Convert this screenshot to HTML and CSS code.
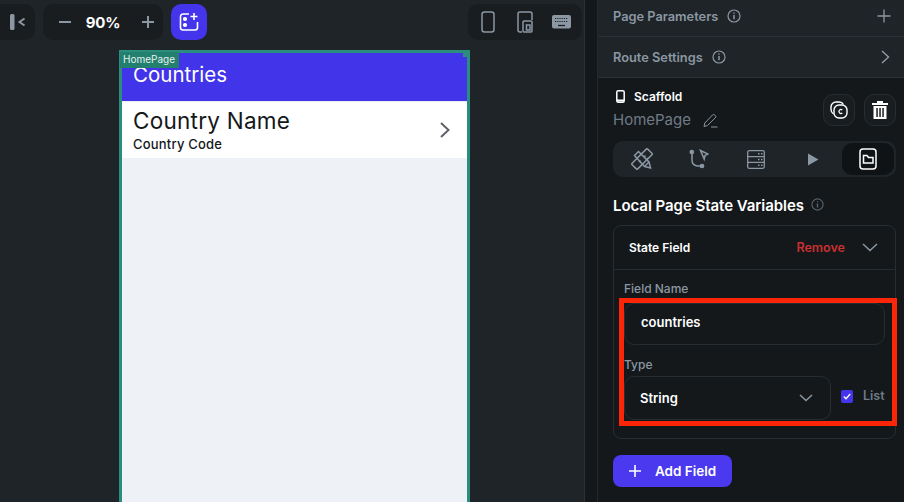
FILE: index.html
```html
<!DOCTYPE html>
<html lang="en">
<head>
<meta charset="utf-8">
<title>HomePage</title>
<link rel="stylesheet" href="styles.css">
</head>
<body>
<div class="app">
  <main class="canvas">
    <div class="toolbar">
      <div class="pill pill-collapse">
        <svg width="20" height="20" viewBox="0 0 20 20" fill="none"><rect x="0" y="2" width="4.500" height="16" rx="1.500" fill="#8b97a2"/><path d="M14.500 6.500l-5 3.500 5 3.500" stroke="#8b97a2" stroke-width="2"/></svg>
      </div>
      <div class="pill pill-zoom">
        <svg class="ic" width="14" height="14" viewBox="0 0 14 14"><path d="M1 7h12" stroke="#8b97a2" stroke-width="2"/></svg>
        <span class="zoom-val">90%</span>
        <svg class="ic" width="14" height="14" viewBox="0 0 14 14"><path d="M1 7h12M7 1v12" stroke="#8b97a2" stroke-width="2"/></svg>
      </div>
      <div class="add-btn">
        <svg width="20" height="20" viewBox="0 0 20 20" fill="none" stroke="#fff" stroke-width="1.600"><path d="M10 2H4a2.500 2.500 0 0 0-2.500 2.500v11A2.500 2.500 0 0 0 4 18h12a2.500 2.500 0 0 0 2.500-2.500V10"/><path d="M15 1v7M11.500 4.500h7"/><circle cx="6" cy="7" r="1.300" fill="#fff"/><circle cx="6" cy="13" r="1.300" fill="#fff"/></svg>
      </div>
      <div class="pill pill-devices">
        <svg width="14" height="22" viewBox="0 0 14 22" fill="none" stroke="#8b97a2" stroke-width="1.500"><rect x="1" y="1" width="12" height="20" rx="2.500"/></svg>
        <svg class="tablet-ic" width="16" height="22" viewBox="0 0 16 22" fill="none" stroke="#8b97a2" stroke-width="1.500"><path d="M5 21H3a2 2 0 0 1-2-2V3a2 2 0 0 1 2-2h10a2 2 0 0 1 2 2v6"/><rect x="6" y="10" width="9" height="11" rx="1"/><rect x="9.500" y="14" width="3.500" height="5"/></svg>
        <svg width="20" height="14" viewBox="0 0 20 14"><rect width="19" height="13.500" rx="2" fill="#8b97a2"/><path d="M3 3.500h13M3 6.500h13" stroke="#1a1f23" stroke-width="1.200" stroke-dasharray="1.200 1"/><path d="M6 10.500h7" stroke="#1a1f23" stroke-width="1.300"/></svg>
      </div>
    </div>
    <div class="phone">
      <span class="phone-tag">HomePage</span>
      <span class="phone-corner"></span>
      <header class="appbar">Countries</header>
      <div class="list-item">
        <div class="item-text">
          <div class="item-title">Country Name</div>
          <div class="item-sub">Country Code</div>
        </div>
        <svg width="12" height="16" viewBox="0 0 12 16" fill="none"><path d="M2 1l7.500 7L2 15" stroke="#5f6368" stroke-width="2"/></svg>
      </div>
    </div>
  </main>
  <div class="strip"></div>
  <aside class="panel">
    <div class="panel-top">
      <div class="row row-params">
        <span class="row-label">Page Parameters</span>
        <svg class="info" width="14" height="14" viewBox="0 0 14 14" fill="none" stroke="#8b97a2" stroke-width="1.200"><circle cx="7" cy="7" r="6"/><path d="M7 6v4.200M7 3.500v1.200" stroke-width="1.500"/></svg>
        <svg class="row-end" width="14" height="14" viewBox="0 0 14 14"><path d="M0.500 7h13M7 0.500v13" stroke="#8b97a2" stroke-width="1.300"/></svg>
      </div>
      <div class="row row-route">
        <span class="row-label">Route Settings</span>
        <svg class="info" width="14" height="14" viewBox="0 0 14 14" fill="none" stroke="#8b97a2" stroke-width="1.200"><circle cx="7" cy="7" r="6"/><path d="M7 6v4.200M7 3.500v1.200" stroke-width="1.500"/></svg>
        <svg class="row-end chevron-end" width="9" height="14" viewBox="0 0 9 14" fill="none"><path d="M1 1l6.500 6L1 13" stroke="#8b97a2" stroke-width="1.500"/></svg>
      </div>
    </div>
    <div class="panel-body">
      <div class="scaffold">
        <div class="scaffold-info">
          <div class="scaffold-title">
            <svg width="9" height="13" viewBox="0 0 9 13" fill="none"><rect x="0.800" y="0.800" width="7.400" height="11.400" rx="1.500" stroke="#fff" stroke-width="1.500"/><path d="M1 10.500h7" stroke="#fff" stroke-width="2"/></svg>
            <span>Scaffold</span>
          </div>
          <div class="scaffold-name">
            <span>HomePage</span>
            <svg width="15" height="15" viewBox="0 0 15 15" fill="none" stroke="#8b97a2" stroke-width="1"><path d="M1 13.500l.8-3.500 7.700-8a1.500 1.500 0 0 1 2.200 0l.6.600a1.500 1.500 0 0 1 0 2.200l-7.800 7.700z"/><path d="M8 14h6.500"/></svg>
          </div>
        </div>
        <div class="square-btn">
          <svg width="18" height="18" viewBox="0 0 18 18" fill="none" stroke="#fff" stroke-width="1.400"><path d="M3.500 13A5.500 5.500 0 0 1 1 8.500V6a5 5 0 0 1 5-5h3a5 5 0 0 1 4.500 2.500"/><rect x="4" y="4" width="13" height="13" rx="5"/><path d="M12.300 9a2 2 0 1 0 0 3" stroke-width="1.300"/></svg>
        </div>
        <div class="square-btn">
          <svg width="16" height="18" viewBox="0 0 16 18" fill="#fff"><path d="M5 0h6v2h5v2H0V2h5zM1.500 5h13v13h-13zM4.300 7v9h1.500V7zm3 0v9h1.500V7zm3 0v9h1.500V7z" fill-rule="evenodd"/></svg>
        </div>
      </div>
      <div class="tabs">
        <div class="tab">
          <svg width="22" height="22" viewBox="0 0 22 22" fill="none" stroke="#8b97a2" stroke-width="1.500"><rect x="7" y="0" width="8" height="22" rx="1" transform="rotate(45 11 11)"/><path d="M10 5l1.500 1.500M7.500 7.500L9 9M12.500 12.500L14 14" transform="rotate(90 11 11)"/><path d="M3.500 7.500L7.500 3.500 18 14l1.500 6-6-1.500z"/><path d="M14 18l4-4"/></svg>
        </div>
        <div class="tab">
          <svg width="20" height="20" viewBox="0 0 20 20" fill="none" stroke="#8b97a2" stroke-width="1.500"><circle cx="2.800" cy="3" r="1.600" fill="#8b97a2"/><circle cx="13" cy="17" r="1.600" fill="#8b97a2"/><path d="M3 4.500v7a5.500 5.500 0 0 0 5.500 5.500H12"/><path d="M11.500 1.500l7.500 3.500-3 1.500-.8 3.500z"/></svg>
        </div>
        <div class="tab">
          <svg width="18" height="19" viewBox="0 0 18 19" fill="none" stroke="#8b97a2" stroke-width="1.300"><rect x="0.700" y="0.700" width="16.600" height="17.600" rx="1.500"/><path d="M1 6.600h16M1 12.400h16"/><path d="M11 3.700h1.500M14 3.700h1.500M11 9.500h1.500M14 9.500h1.500M11 15.300h1.500M14 15.300h1.500" stroke-width="1.500"/></svg>
        </div>
        <div class="tab">
          <svg width="12" height="13" viewBox="0 0 12 13"><path d="M1 0.500l10.500 6L1 12.500z" fill="#8b97a2"/></svg>
        </div>
        <div class="tab tab-active">
          <svg width="18" height="22" viewBox="0 0 18 22" fill="none" stroke="#fff" stroke-width="1.500"><rect x="1" y="1" width="16" height="20" rx="3"/><path d="M4.500 7.500h3.500l1.500 2h4.500v5.500h-9.500z"/></svg>
        </div>
      </div>
      <h2 class="section-title">Local Page State Variables
        <svg class="title-info" width="13" height="13" viewBox="0 0 14 14" fill="none" stroke="#57636c" stroke-width="1.200"><circle cx="7" cy="7" r="6"/><path d="M7 6v4.200M7 3.500v1.200" stroke-width="1.500"/></svg>
      </h2>
      <div class="card">
        <div class="card-head">
          <span class="card-title">State Field</span>
          <span class="remove">Remove</span>
          <svg width="16" height="9" viewBox="0 0 16 9" fill="none"><path d="M1 1l7 6.500L15 1" stroke="#8b97a2" stroke-width="1.500"/></svg>
        </div>
        <div class="card-body">
          <label class="field-label">Field Name</label>
          <div class="input">countries</div>
          <label class="field-label label-type">Type</label>
          <div class="type-row">
            <div class="select">
              <span>String</span>
              <svg width="14" height="8" viewBox="0 0 14 8" fill="none"><path d="M1 1l6 5.500L13 1" stroke="#8b97a2" stroke-width="1.500"/></svg>
            </div>
            <div class="checkbox">
              <svg width="8" height="7" viewBox="0 0 8 7" fill="none"><path d="M0.800 3.500l2.200 2.200L7.200 1" stroke="#fff" stroke-width="1.300"/></svg>
            </div>
            <span class="list-label">List</span>
          </div>
          <div class="highlight"></div>
        </div>
      </div>
      <button class="add-field" type="button">
        <svg width="12" height="12" viewBox="0 0 12 12"><path d="M0 6h12M6 0v12" stroke="#fff" stroke-width="1.600"/></svg>
        <span>Add Field</span>
      </button>
    </div>
  </aside>
</div>
</body>
</html>
```

FILE: styles.css
```css
* { box-sizing: border-box; }
html, body { margin: 0; padding: 0; height: 100%; overflow: hidden; }
body { font-family: "Inter", "Liberation Sans", sans-serif; background: #14181b; }
.app { display: flex; width: 904px; height: 502px; overflow: hidden; }

/* Canvas */
.canvas { width: 585px; background: #1e2428; border-right: 1px solid #2a3036; display: flex; flex-direction: column; }
.toolbar { display: flex; align-items: center; height: 36px; margin-top: 4px; }
.pill { background: #191d20; border-radius: 10px; height: 36px; display: flex; align-items: center; }
.pill-collapse { width: 35px; padding-left: 10px; border-radius: 0 10px 10px 0; }
.pill-zoom { width: 120px; margin-left: 8px; padding: 0 8px 0 15px; justify-content: space-between; }
.zoom-val { color: #fff; font-size: 15px; font-weight: 700; margin-right: 7px; letter-spacing: -.2px; }
.add-btn { width: 36px; height: 36px; margin-left: 8px; border-radius: 10px; background: #4434ec; display: flex; align-items: center; justify-content: center; }
.pill-devices { width: 114px; margin-left: 261px; padding: 0 10px 0 13px; justify-content: space-between; }
.tablet-ic { margin-left: 2px; }

.phone { position: relative; width: 351px; height: 462px; margin: 10px 0 0 119px; border: 3px solid #2a8d7d; border-bottom: 0; background: #eef1f6; }
.phone-tag { position: absolute; left: -2px; top: -1px; width: 59px; height: 16px; background: #23806f; color: #e6f2f0; font-size: 10px; line-height: 15px; padding-left: 3px; z-index: 1; }
.phone-corner { position: absolute; right: -1px; top: -1px; width: 5px; height: 5px; background: #2a8d7d; }
.appbar { height: 48px; background: #4234e8; color: #fff; font-size: 20.500px; line-height: 44px; padding-left: 11px; }
.list-item { height: 57px; background: #fff; display: flex; align-items: center; justify-content: space-between; padding: 0 16px 0 11px; box-shadow: 0 1px 1px rgba(0,0,0,.08) inset; }
.item-title { color: #14181b; font-size: 22.500px; line-height: 29px; letter-spacing: .25px; }
.item-sub { color: #14181b; font-size: 13px; font-weight: 500; line-height: 18px; letter-spacing: .2px; }

.strip { width: 12px; background: #14181b; }

/* Panel */
.panel { flex: 1; display: flex; flex-direction: column; border-left: 1px solid #22282d; color: #fff; }
.panel-top { background: #1e2428; height: 78px; border-bottom: 1px solid #2a3036; }
.row { display: flex; align-items: center; padding: 0 13px 0 15px; }
.row-params { height: 37px; border-bottom: 1px solid #2a3036; padding-bottom: 4px; }
.row-route { height: 40px; }
.row-label { color: #8b97a2; font-size: 12.800px; font-weight: 600; }
.info { margin-left: 9px; }
.row-end { margin-left: auto; }
.chevron-end { margin-right: 1px; }

.panel-body { flex: 1; padding: 10px 8px 0 15px; display: flex; flex-direction: column; }
.scaffold { display: flex; align-items: flex-start; height: 53px; padding-top: 6px; }
.scaffold-info { flex: 1; margin-top: -6px; }
.scaffold-title { display: flex; align-items: center; gap: 9px; padding-left: 3px; height: 16px; font-size: 12px; font-weight: 600; }
.scaffold-name { display: flex; align-items: center; gap: 12px; margin-top: 5px; color: #6f7b86; font-size: 15px; line-height: 22px; }
.square-btn { width: 32px; height: 32px; margin-left: 9px; border: 1px solid #262d32; border-radius: 10px; background: #191d20; display: flex; align-items: center; justify-content: center; }
.tabs { display: flex; align-items: center; width: 283px; height: 36px; padding: 2px 2px 2px 0; background: #1e2428; border-radius: 10px; }
.tab { flex: 0 0 57px; height: 32px; display: flex; align-items: center; justify-content: center; border-radius: 10px; }
.tab-active { background: #101315; flex: 0 0 52px; margin-left: 1px; }
.section-title { display: flex; align-items: center; margin: 19px 0 0; height: 18px; font-size: 15px; font-weight: 600; letter-spacing: -.05px; }
.title-info { margin-left: 7px; margin-top: -2px; }
.card { width: 283px; height: 214px; margin-top: 11px; border: 1px solid #262d32; border-radius: 8px; }
.card-head { display: flex; align-items: center; height: 44px; padding: 0 17px 0 15px; border-bottom: 1px solid #262d32; }
.card-title { flex: 1; font-size: 12px; font-weight: 600; }
.remove { color: #c9302f; font-size: 12.500px; font-weight: 600; margin-right: 17px; }
.card-body { position: relative; padding: 11px 10px 0; }
.field-label { display: block; color: #8b97a2; font-size: 12px; line-height: 16px; font-weight: 500; }
.input { width: 261px; height: 42px; margin-top: 6px; border: 1px solid #262d32; border-radius: 10px; background: #14181b; padding-left: 16px; font-size: 13px; font-weight: 600; line-height: 36px; }
.label-type { margin-top: 12px; }
.type-row { display: flex; align-items: center; margin-top: 3px; }
.select { width: 207px; height: 44px; border: 1px solid #262d32; border-radius: 10px; padding: 0 17px 0 15px; display: flex; align-items: center; justify-content: space-between; font-size: 13px; font-weight: 600; }
.checkbox { width: 12px; height: 13px; margin: -4px 0 0 10px; background: #4434ec; border-radius: 2px; display: flex; align-items: center; justify-content: center; }
.list-label { margin: -6px 0 0 10px; color: #6f7b86; font-size: 12.500px; font-weight: 600; }
.highlight { position: absolute; left: 5px; top: 28px; width: 278px; height: 128px; border: 5px solid #fb2508; pointer-events: none; }
.add-field { display: flex; align-items: center; gap: 14px; width: 119px; height: 32px; margin-top: 16px; padding: 0 0 0 16px; border: 0; border-radius: 8px; background: #4b39ef; color: #fff; font: 600 13.500px "Inter", "Liberation Sans", sans-serif; }
```
